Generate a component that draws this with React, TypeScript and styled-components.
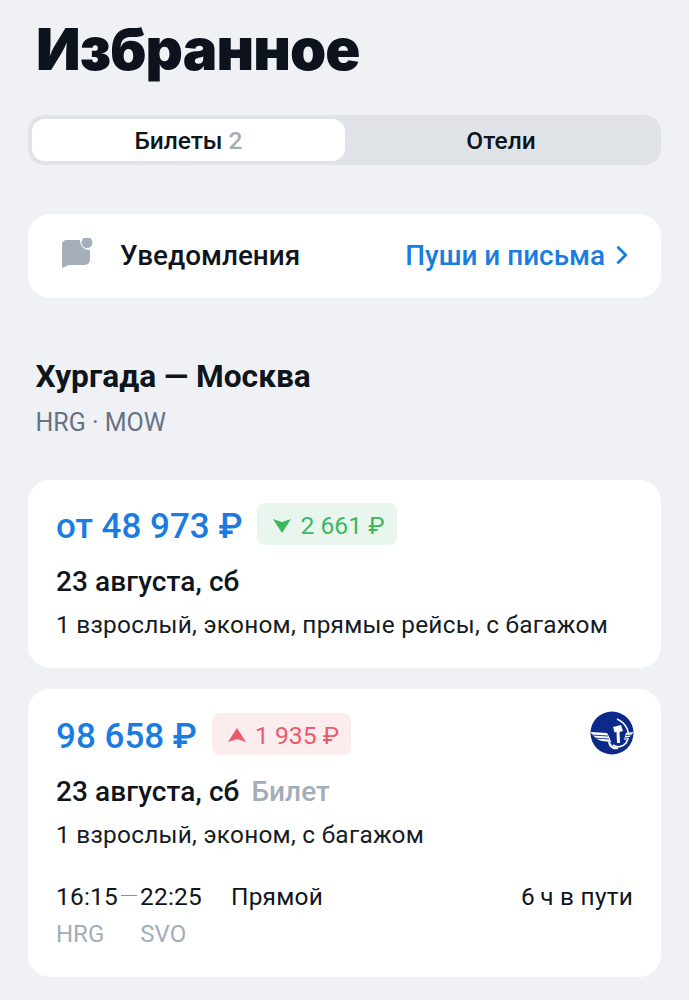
import styled, { createGlobalStyle } from "styled-components";
import { ChevronRight } from "lucide-react";

const GlobalStyle = createGlobalStyle`
    html, body {
        margin: 0;
        padding: 0;
        background-color: #eff1f5;
    }
    body {
        font-family: Roboto, "Noto Sans", sans-serif;
        color: #0f151d;
    }
`

const Page = styled.div`
    width: 689px;
    height: 1000px;
    box-sizing: border-box;
    padding: 0 28px;
    overflow: hidden;
`

const Title = styled.h1`
    margin: 0;
    padding: 14px 0 0 8px;
    height: 115px;
    box-sizing: border-box;
    font-family: Inter, sans-serif;
    font-size: 58px;
    line-height: 70px;
    font-weight: 900;
    letter-spacing: -0.9px;
    color: #0c131c;
`

const Tabs = styled.div`
    display: grid;
    grid-template-columns: 313px 1fr;
    height: 50px;
    box-sizing: border-box;
    padding: 4px;
    border-radius: 16px;
    background-color: #e0e3e8;
`

const Tab = styled.div<{ $active?: boolean }>`
    display: flex;
    justify-content: center;
    align-items: center;
    gap: 6px;
    border-radius: 13px;
    font-size: 24.5px;
    font-weight: 480;
    background-color: ${(p) => (p.$active ? "#fff" : "transparent")};

    span {
        color: #a3adb9;
    }
`

const Card = styled.section`
    box-sizing: border-box;
    border-radius: 22px;
    background-color: #fff;
`

const NoticeCard = styled(Card)`
    display: flex;
    align-items: center;
    height: 84px;
    margin-top: 49px;
    padding: 0 24px 2px 33px;
    font-size: 27.9px;
    font-weight: 500;
`

const NoticeLabel = styled.div`
    margin-left: 27px;
    flex: 1;
`

const NoticeLink = styled.div`
    display: flex;
    align-items: center;
    gap: 2px;
    color: #1a7ce0;
`

const Route = styled.div`
    height: 182px;
    box-sizing: border-box;
    padding: 59px 0 0 7.5px;
`

const RouteName = styled.div`
    font-size: 31.7px;
    line-height: 40px;
    font-weight: 700;
`

const RouteCodes = styled.div`
    margin-top: 11px;
    font-size: 25px;
    line-height: 30px;
    color: #667384;
`

const TicketCard = styled(Card)<{ $height: number; $top: number }>`
    height: ${(p) => p.$height}px;
    margin-bottom: 21px;
    padding: ${(p) => p.$top}px 28px 0;
`

const PriceRow = styled.div`
    display: flex;
    align-items: center;
    gap: 15px;
    height: 42px;
`

const Price = styled.div`
    padding-top: 4px;
    font-size: 35px;
    font-weight: 500;
    color: #1a7ce0;
`

const Delta = styled.div<{ $down?: boolean }>`
    display: flex;
    align-items: center;
    gap: 9px;
    height: 42px;
    box-sizing: border-box;
    padding: 2px 12px 0 16px;
    border-radius: 8px;
    font-size: 24.7px;
    font-weight: 440;
    color: ${(p) => (p.$down ? "#3eb761" : "#e95b6c")};
    background-color: ${(p) => (p.$down ? "#e9f6ee" : "#fdecee")};
`

const Logo = styled.svg`
    flex: none;
    margin: -3px -1px 0 auto;
`

const DateRow = styled.div`
    display: flex;
    gap: 12px;
    margin-top: 18px;
    font-size: 28px;
    line-height: 38px;
    font-weight: 500;
    letter-spacing: 0.1px;

    span {
        color: #a3adb9;
    }
`

const Details = styled.div`
    margin-top: 7px;
    font-size: 24.4px;
    line-height: 34px;
    letter-spacing: 0.25px;
    color: #161c24;
`

const FlightRow = styled.div`
    display: flex;
    align-items: center;
    margin-top: 28px;
    font-size: 24.4px;
    line-height: 34px;
    letter-spacing: 0.25px;
`

const Dash = styled.i`
    width: 16px;
    height: 1px;
    margin: 0 3px 4px;
    background-color: #8a94a1;
`

const Direct = styled.div`
    margin-left: 29px;
    flex: 1;
`

const Airports = styled.div`
    display: flex;
    gap: 36px;
    margin-top: 4px;
    font-size: 24px;
    line-height: 32px;
    color: #a3adb9;
`

function Triangle({ down }: { down?: boolean }) {
    return (
        <svg width="18" height="15" viewBox="0 0 18 15" fill="currentColor">
            {down ? <path d="M0 1 L9 4 L18 1 L9 15 Z" /> : <path d="M0 14 L9 11 L18 14 L9 0 Z" />}
        </svg>
    );
}

function BellNote() {
    return (
        <svg width="32" height="34" viewBox="0 0 32 34" fill="#a5afbc">
            <path d="M6 2 H19 C19 8 23 12 29 12 V21 C29 26 26 27 22 27 H8 L1 30 V7 C1 4 3 2 6 2 Z" />
            <circle cx="26" cy="4.5" r="5.5" />
        </svg>
    );
}

function AeroflotLogo() {
    return (
        <Logo width="44" height="44" viewBox="0 0 44 44">
            <circle cx="22" cy="22" r="21.5" fill="#0b2a8a" />
            <path d="M27 8 C36 12 42 22 36 32 C33 36 27 37 23 34" fill="none" stroke="#fff" strokeWidth="1.6" />
            <path d="M23 16 L31 14 L33 20 L29.5 21 L30 32 L27 32 L26.5 21 L24.5 21.5 Z" fill="#fff" />
            <path d="M0.5 21 L17 22 C19 25 20 28 21 31 L12 30 C7 29 3 25 0.5 21 Z" fill="#fff" />
            <path d="M43.5 21 L36 22 L34 29 C38 28 41 25 43.5 21 Z" fill="#fff" />
            <path d="M2 24 L18 25 M5 27 L19 28 M42 24 L36 24.5 M40 26.5 L35 27" stroke="#0b2a8a" strokeWidth="0.9" fill="none" />
            <path d="M19 31 C20 36 24 38 28 37" fill="none" stroke="#fff" strokeWidth="2.2" />
        </Logo>
    );
}

export default function App() {
    return (
        <Page>
            <GlobalStyle />
            <Title>Избранное</Title>
            <Tabs>
                <Tab $active>Билеты <span>2</span></Tab>
                <Tab>Отели</Tab>
            </Tabs>
            <NoticeCard>
                <BellNote />
                <NoticeLabel>Уведомления</NoticeLabel>
                <NoticeLink>
                    Пуши и письма
                    <ChevronRight size={30} strokeWidth={2.2} />
                </NoticeLink>
            </NoticeCard>
            <Route>
                <RouteName>Хургада — Москва</RouteName>
                <RouteCodes>HRG · MOW</RouteCodes>
            </Route>
            <TicketCard $height={188} $top={23}>
                <PriceRow>
                    <Price>от 48 973 ₽</Price>
                    <Delta $down><Triangle down />2 661 ₽</Delta>
                </PriceRow>
                <DateRow>23 августа, сб</DateRow>
                <Details>1 взрослый, эконом, прямые рейсы, с багажом</Details>
            </TicketCard>
            <TicketCard $height={288} $top={24}>
                <PriceRow>
                    <Price>98 658 ₽</Price>
                    <Delta><Triangle />1 935 ₽</Delta>
                    <AeroflotLogo />
                </PriceRow>
                <DateRow>23 августа, сб <span>Билет</span></DateRow>
                <Details>1 взрослый, эконом, с багажом</Details>
                <FlightRow>
                    16:15<Dash />22:25
                    <Direct>Прямой</Direct>
                    6{"\u2009"}ч в пути
                </FlightRow>
                <Airports>
                    <div>HRG</div>
                    <div>SVO</div>
                </Airports>
            </TicketCard>
        </Page>
    );
}
